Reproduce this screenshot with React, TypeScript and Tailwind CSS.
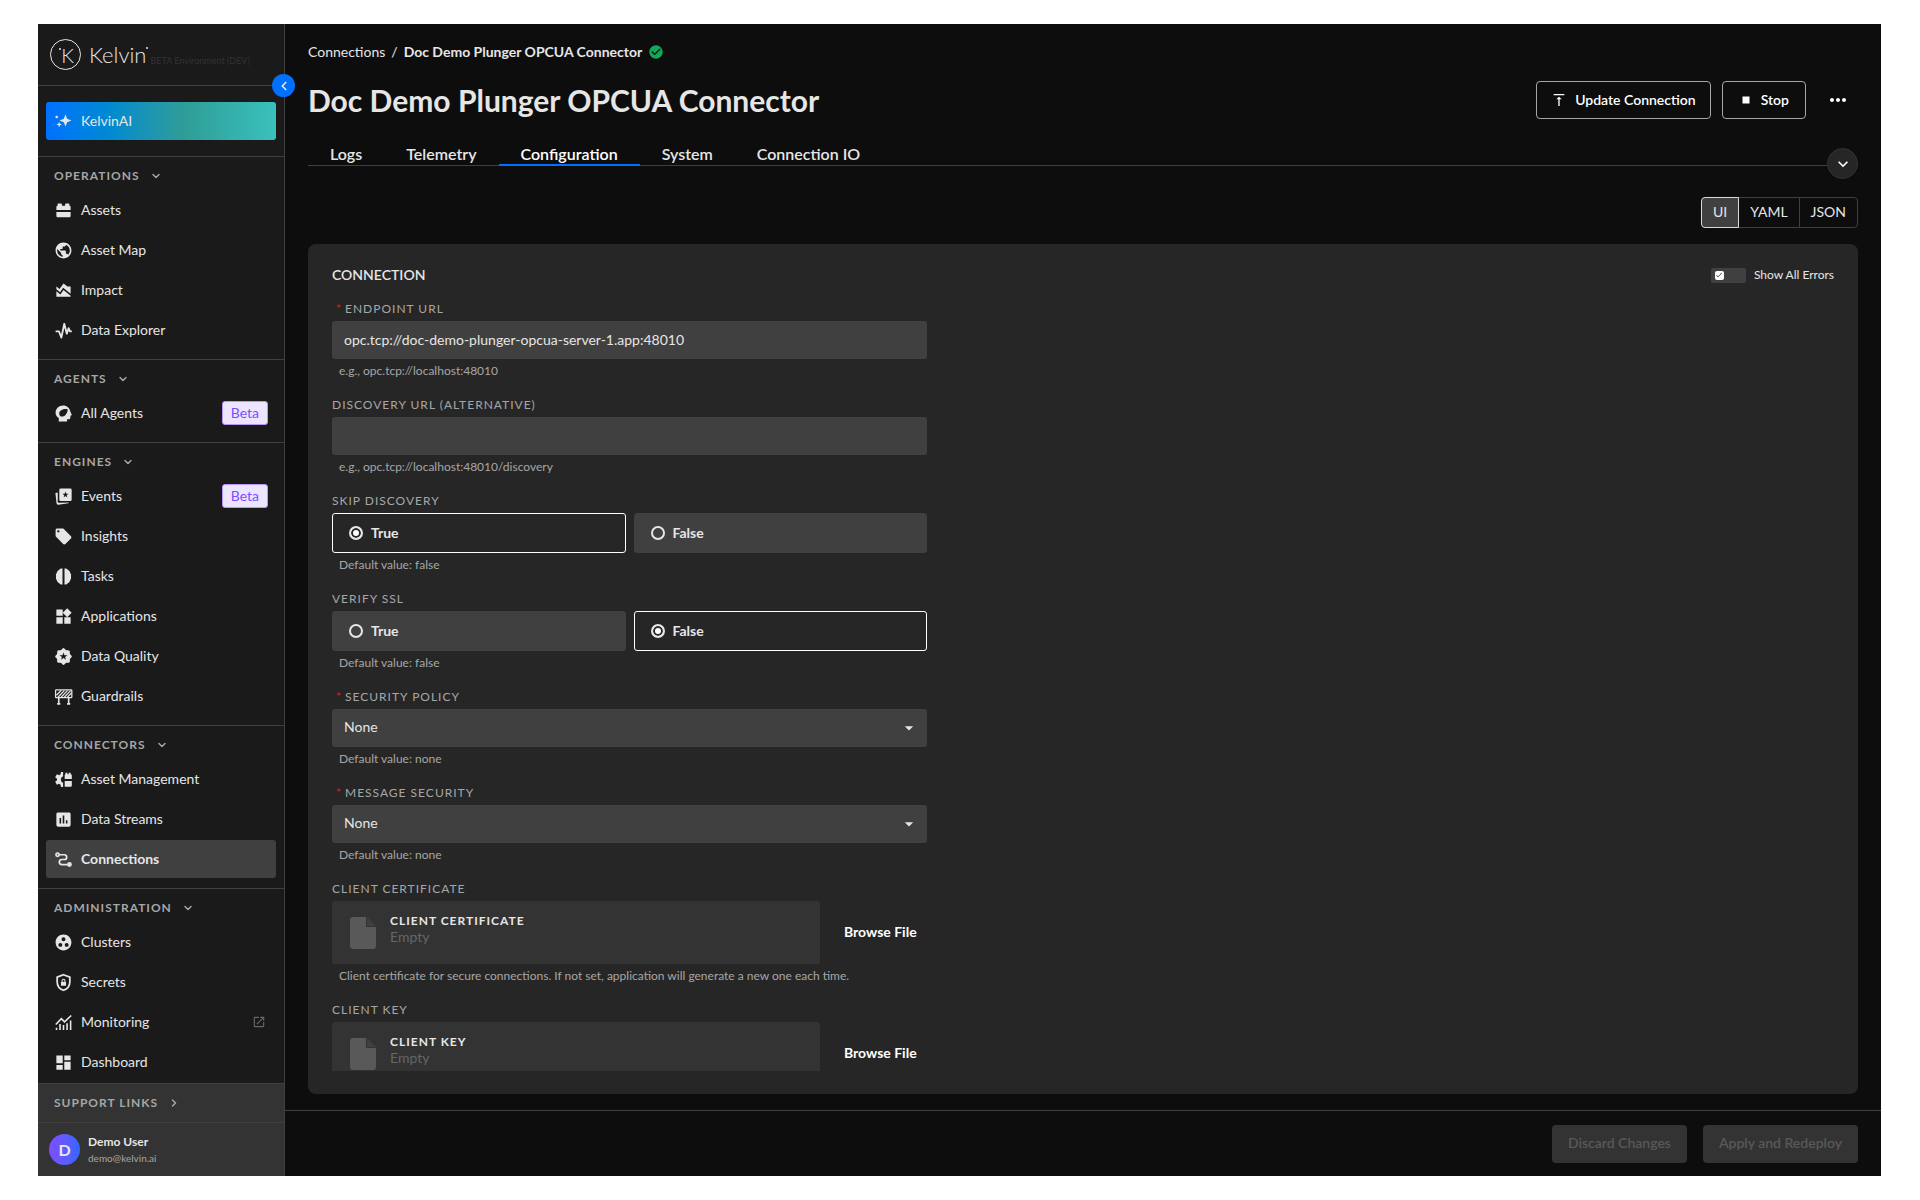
import React, { useState } from 'react';
import {
  MdAreaChart,
  MdArrowDropDown,
  MdAssessment,
  MdCheck,
  MdCheckCircle,
  MdDashboard,
  MdExpandMore,
  MdGroupWork,
  MdLocalOffer,
  MdMoreHoriz,
  MdOpenInNew,
  MdPublic,
  MdStop,
  MdVerticalAlignTop,
  MdWidgets,
} from 'react-icons/md';
import { ChevronDown, ChevronLeft, ChevronRight } from 'lucide-react';

type IconProps = { className?: string };

const SparkleIcon = ({ className }: IconProps) => (
  <svg viewBox="0 0 24 24" fill="currentColor" className={className}>
    <path d="M14.5 4.5 16.6 9.9 22 12 16.6 14.1 14.5 19.5 12.4 14.1 7 12 12.4 9.9Z" />
    <path d="M6.5 13.5 7.5 16 10 17 7.5 18 6.5 20.5 5.5 18 3 17 5.5 16Z" />
    <circle cx="3.4" cy="7.6" r="1.7" />
  </svg>
);

const BrickIcon = ({ className }: IconProps) => (
  <svg viewBox="0 0 24 24" fill="currentColor" className={className}>
    <path d="M3 11.5V7.5A1.5 1.5 0 0 1 4.5 6V4A1 1 0 0 1 5.5 3H9a1 1 0 0 1 1 1V6h4V4a1 1 0 0 1 1-1h3.5a1 1 0 0 1 1 1V6A1.5 1.5 0 0 1 21 7.5v4Z" />
    <path d="M3 14h18v5a1.5 1.5 0 0 1-1.5 1.5h-15A1.5 1.5 0 0 1 3 19Z" />
  </svg>
);

const PulseIcon = ({ className }: IconProps) => (
  <svg viewBox="0 0 24 24" fill="none" stroke="currentColor" strokeWidth="2.3" strokeLinejoin="round" className={className}>
    <path d="M2 13h4.2L9.3 21 13 3.5 16.2 16 18.5 9l1.7 4H22.5" />
  </svg>
);

const AgentIcon = ({ className }: IconProps) => (
  <svg viewBox="0 0 24 24" fill="currentColor" fillRule="evenodd" className={className}>
    <path d="M11.5 2C16.3 2 20 5.3 20.7 9.8L22.3 13.3c.3.7 0 1.2-.8 1.2H20.7V17c0 1.4-.9 2.3-2.2 2.3H16.5V22H6V17.8C3.5 16.3 2 13.9 2 11 2 6 6.2 2 11.5 2ZM17.2 6.5C11.5 5.7 7 8 6.6 11.5c-.1 1.5.2 2.7 1 3.6 1 .8 2 .9 3.5.6C14.500 14.8 17.3 11.5 17.2 6.5Z" />
  </svg>
);

const EventsIcon = ({ className }: IconProps) => (
  <svg viewBox="0 0 24 24" fill="currentColor" fillRule="evenodd" className={className}>
    <path d="M8.5 2H20.5A1.8 1.8 0 0 1 22.3 3.8V16A1.8 1.8 0 0 1 20.5 17.8H8.5A1.8 1.8 0 0 1 6.7 16V3.8A1.8 1.8 0 0 1 8.5 2ZM14.5 5.8 13.5 8.6H10.7L13 10.4 12.1 13.3 14.5 11.5 16.9 13.3 16 10.4 18.3 8.6H15.5Z" />
    <path d="M1.8 7.5 4.7 6.9V18.5A1.3 1.3 0 0 0 6 19.8L18.5 19.6 18.3 20.6 5.5 22.3A2 2 0 0 1 3.2 20.6Z" />
  </svg>
);

const TasksIcon = ({ className }: IconProps) => (
  <svg viewBox="0 0 24 24" fill="currentColor" className={className}>
    <path d="M10.7 2H8.5L4.5 5 2.5 9.5V14.5L4.5 19 8.5 22H10.7Z" />
    <path d="M13.3 2H15.5L19.500 5 21.5 9.5V14.5L19.5 19 15.5 22H13.3Z" />
  </svg>
);

const QualityIcon = ({ className }: IconProps) => (
  <svg viewBox="0 0 24 24" fill="currentColor" className={className}>
    <rect x="4" y="4" width="16" height="16" rx="2" />
    <rect x="4" y="4" width="16" height="16" rx="2" transform="rotate(45 12 12)" />
    <path fill="#1a1a1a" d="M12 6.8 13.3 10.4H17L14 12.6 15.2 16.2 12 14 8.8 16.2 10 12.6 7 10.4H10.7Z" />
  </svg>
);

const BarrierIcon = ({ className }: IconProps) => (
  <svg viewBox="0 0 24 24" fill="none" stroke="currentColor" strokeWidth="1.6" className={className}>
    <rect x="2" y="3.5" width="20.5" height="10" rx="1" />
    <path d="M3 10.5 9 4.5M5 13 13 4.5M9 13 17 4.5M13 13 21 4.5M17 13 22 7.5" />
    <path d="M6 14v7.5M18.5 14v7.5M4 21.3h4M16.5 21.3h4" strokeWidth="2" />
  </svg>
);

const AssetGearIcon = ({ className }: IconProps) => (
  <svg viewBox="0 0 24 24" fill="currentColor" className={className}>
    <path d="M11.5 2.5H8.8L8.3 5.5 6.5 6.5 3.7 5.5 1.5 9.2 3.8 11.2V12.8L1.5 14.8 3.7 18.5 6.5 17.5 8.3 18.5 8.8 21.5H11.5V16.2A4.5 4.5 0 0 1 11.5 7.8Z" />
    <path d="M13.5 11.5V6.5a1 1 0 0 1 1-1V3.5h2.5v2h1.5v-2H21v2a1.5 1.5 0 0 1 1.5 1.5v4.5ZM13.5 14H22.5v5.5a1.5 1.5 0 0 1-1.5 1.5H13.5Z" />
  </svg>
);

const RouteIcon = ({ className }: IconProps) => (
  <svg viewBox="0 0 24 24" fill="none" stroke="currentColor" strokeWidth="2.2" className={className}>
    <circle cx="4.5" cy="6" r="2" />
    <path d="M7 6H13A3 3 0 0 1 13 12H10A3.2 3.2 0 0 0 10 18.5H17" />
    <circle cx="19.5" cy="18.3" r="2" fill="currentColor" />
  </svg>
);

const ShieldLockIcon = ({ className }: IconProps) => (
  <svg viewBox="0 0 24 24" fill="none" stroke="currentColor" strokeWidth="2.2" className={className}>
    <path d="M12 2.2 20 5.2V11C20 16 16.6 20.3 12 21.8 7.4 20.3 4 16 4 11V5.2Z" />
    <rect x="8.8" y="11" width="6.4" height="5.2" rx="0.5" fill="currentColor" stroke="none" />
    <path d="M10.2 11V9.6a1.8 1.8 0 0 1 3.6 0V11" strokeWidth="1.3" />
  </svg>
);

const MonitoringIcon = ({ className }: IconProps) => (
  <svg viewBox="0 0 24 24" fill="none" stroke="currentColor" strokeWidth="2" className={className}>
    <path d="M2.2 14.5 9.3 7.2 13.3 11.2 21.8 3.2" />
    <path d="M3.2 21.5V18.5M7.6 21.5V14M12 21.5V15M16.5 21.5V13M21 21.5V9.5" />
  </svg>
);

const FileIcon = ({ className }: IconProps) => (
  <svg viewBox="0 0 26 32" className={className}>
    <path fill="#595959" d="M3 0H16V10H26V29a3 3 0 0 1-3 3H3a3 3 0 0 1-3-3V3a3 3 0 0 1 3-3Z" />
    <path fill="#404040" d="M17 0 26 9H17Z" />
  </svg>
);

type NavItem = {
  label: string;
  icon: React.ComponentType<IconProps>;
  beta?: boolean;
  external?: boolean;
};

const sections: { title: string; items: NavItem[] }[] = [
  {
    title: 'Operations',
    items: [
      { label: 'Assets', icon: BrickIcon },
      { label: 'Asset Map', icon: MdPublic },
      { label: 'Impact', icon: MdAreaChart },
      { label: 'Data Explorer', icon: PulseIcon },
    ],
  },
  {
    title: 'Agents',
    items: [{ label: 'All Agents', icon: AgentIcon, beta: true }],
  },
  {
    title: 'Engines',
    items: [
      { label: 'Events', icon: EventsIcon, beta: true },
      { label: 'Insights', icon: MdLocalOffer },
      { label: 'Tasks', icon: TasksIcon },
      { label: 'Applications', icon: MdWidgets },
      { label: 'Data Quality', icon: QualityIcon },
      { label: 'Guardrails', icon: BarrierIcon },
    ],
  },
  {
    title: 'Connectors',
    items: [
      { label: 'Asset Management', icon: AssetGearIcon },
      { label: 'Data Streams', icon: MdAssessment },
      { label: 'Connections', icon: RouteIcon },
    ],
  },
  {
    title: 'Administration',
    items: [
      { label: 'Clusters', icon: MdGroupWork },
      { label: 'Secrets', icon: ShieldLockIcon },
      { label: 'Monitoring', icon: MonitoringIcon, external: true },
      { label: 'Dashboard', icon: MdDashboard },
    ],
  },
];

const tabs = ['Logs', 'Telemetry', 'Configuration', 'System', 'Connection IO'];
const formats = ['UI', 'YAML', 'JSON'];

const Sidebar: React.FC = () => (
  <aside className="relative flex w-[247px] shrink-0 flex-col border-r border-[#404040] bg-[#1a1a1a]">
    {/* Logo */}
    <div className="flex h-[61px] shrink-0 items-center pl-3">
      <div className="relative flex size-[31px] items-center justify-center rounded-full border border-[#e6e6e6] pl-1 text-xl leading-none font-light">
        K
        <span className="absolute top-[8px] left-[8px] size-[2px] rounded-full bg-[#e6e6e6]" />
      </div>
      <div className="relative ml-2 text-[22px] leading-[30px] font-light">
        Kelvin
        <span className="absolute top-[7px] -right-[2px] size-[2px] rounded-full bg-[#e6e6e6]" />
      </div>
      <span className="mt-3 ml-1 text-[9px] leading-3 whitespace-nowrap text-[#333333]">BETA Environment (DEV)</span>
    </div>

    <button
      aria-label="Collapse sidebar"
      className="absolute top-[50px] -right-[11px] z-10 flex size-[23px] items-center justify-center rounded-full bg-[#0070ff]"
    >
      <ChevronLeft className="size-[14px]" strokeWidth={3} />
    </button>

    <div className="shrink-0 border-t border-[#404040] px-2 pt-4 pb-4">
      <a
        href="#kelvin-ai"
        className="flex h-[38px] items-center gap-2 rounded-[3px] bg-linear-to-r from-[#0070ff] via-[#2f9d97] via-60% to-[#3ac1bd] px-2 pb-px"
      >
        <SparkleIcon className="size-[19px]" />
        <span>KelvinAI</span>
      </a>
    </div>

    {/* Navigation */}
    <nav className="min-h-0 flex-1 overflow-hidden">
      {sections.map((section) => (
        <div key={section.title} className="border-t border-[#404040] px-2 pb-[10px]">
          <button className="flex h-[34px] items-center gap-[10px] pt-1 pl-2 text-xs font-bold tracking-[1px] text-[#a6a6a6] uppercase">
            {section.title}
            <ChevronDown className="size-3" strokeWidth={3} />
          </button>
          <div className="flex flex-col gap-[2px]">
            {section.items.map(({ label, icon: Icon, beta, external }) => (
              <a
                key={label}
                href="#"
                className={`flex h-[38px] items-center gap-2 rounded-[3px] px-2 ${
                  label === 'Connections' ? 'bg-[#404040] font-bold' : ''
                }`}
              >
                <Icon className="size-[19px]" />
                <span>{label}</span>
                {beta && (
                  <span className="ml-auto rounded-[3px] border border-[#b794f6] bg-[#ede5ff] px-2 leading-[22px] text-[#7c4dff]">
                    Beta
                  </span>
                )}
                {external && <MdOpenInNew className="mr-[2px] ml-auto size-[14px] text-[#666666]" />}
              </a>
            ))}
          </div>
        </div>
      ))}
    </nav>

    {/* Support and user */}
    <div className="shrink-0 bg-[#333333]">
      <button className="flex h-[39px] w-full items-center gap-[10px] border-t border-[#404040] pl-4 text-xs font-bold tracking-[1px] text-[#a6a6a6] uppercase">
        Support Links
        <ChevronRight className="size-3" strokeWidth={3} />
      </button>
      <div className="flex h-[54px] items-center gap-2 border-t border-[#404040] pl-[11px]">
        <div className="flex size-[31px] items-center justify-center rounded-full bg-linear-to-r from-[#7c4dff] to-[#3366ff] text-base font-bold">
          D
        </div>
        <div>
          <div className="text-xs leading-4 font-bold">Demo User</div>
          <div className="text-[10px] leading-4 text-[#a6a6a6]">demo@kelvin.ai</div>
        </div>
      </div>
    </div>
  </aside>
);

type FieldProps = {
  id: string;
  label: string;
  helper?: string;
  required?: boolean;
  children: React.ReactNode;
};

const Field: React.FC<FieldProps> = ({ id, label, helper, required, children }) => (
  <div className="mb-[18px]">
    <label htmlFor={id} className="mb-1 flex h-4 items-center text-xs tracking-[1px] text-[#a6a6a6] uppercase">
      {required && <span className="mr-1 ml-1 w-[5px] text-[#e02020]">*</span>}
      {label}
    </label>
    {children}
    {helper && <p className="mt-1 pl-[7px] text-xs leading-4 text-[#a6a6a6]">{helper}</p>}
  </div>
);

const BooleanField: React.FC<{ id: string; label: string; initial: string }> = ({ id, label, initial }) => {
  const [value, setValue] = useState(initial);

  return (
    <Field id={`${id}-True`} label={label} helper="Default value: false">
      <div role="radiogroup" aria-label={label} className="grid grid-cols-2 gap-2">
        {['True', 'False'].map((option) => (
          <label
            key={option}
            className={`flex h-10 items-center gap-2 rounded-[3px] border px-4 font-bold ${
              value === option ? 'border-white bg-[#262626]' : 'border-[#404040] bg-[#404040]'
            }`}
          >
            <input
              type="radio"
              id={`${id}-${option}`}
              name={id}
              checked={value === option}
              onChange={() => setValue(option)}
              className="size-[14px] appearance-none rounded-full border-2 border-[#e6e6e6] checked:bg-white checked:shadow-[inset_0_0_0_2px_#262626]"
            />
            {option}
          </label>
        ))}
      </div>
    </Field>
  );
};

const SelectField: React.FC<{ id: string; label: string }> = ({ id, label }) => (
  <Field id={id} label={label} helper="Default value: none" required>
    <div className="relative">
      <select id={id} className="block h-[38px] w-full appearance-none rounded-[3px] bg-[#404040] px-3 pb-[2px]">
        <option>None</option>
      </select>
      <MdArrowDropDown className="pointer-events-none absolute top-[9px] right-2 size-5" />
    </div>
  </Field>
);

const FileField: React.FC<{ id: string; label: string; helper?: string }> = ({ id, label, helper }) => (
  <Field id={id} label={label} helper={helper}>
    <div className="flex items-center">
      <div className="flex h-[63px] flex-1 items-center gap-[14px] rounded-[3px] bg-[#333333] pl-[18px]">
        <FileIcon className="h-8 w-[26px]" />
        <div className="pb-2">
          <div className="text-xs leading-4 font-bold tracking-[1px] uppercase">{label}</div>
          <div className="leading-4 text-[#666666]">Empty</div>
        </div>
      </div>
      <button id={id} className="w-[107px] pr-3 pb-[2px] pl-6 text-left font-bold whitespace-nowrap text-white">
        Browse File
      </button>
    </div>
  </Field>
);

const App: React.FC = () => {
  const [activeTab, setActiveTab] = useState('Configuration');
  const [format, setFormat] = useState('UI');
  const [endpoint, setEndpoint] = useState('opc.tcp://doc-demo-plunger-opcua-server-1.app:48010');
  const [discovery, setDiscovery] = useState('');
  const [showErrors, setShowErrors] = useState(false);

  return (
    <div className="h-screen bg-white py-6 pr-[39px] pl-[38px]">
      <div className="flex h-full bg-[#0d0d0d] font-['Lato',sans-serif] text-sm leading-5 text-[#e6e6e6]">
        <Sidebar />

        <div className="flex min-w-0 flex-1 flex-col">
          <main className="flex min-h-0 flex-1 flex-col px-[23px] pt-[18px] pb-4">
            {/* Breadcrumb */}
            <div className="flex h-5 items-center gap-[6px]">
              <a href="#connections">Connections</a>
              <span>/</span>
              <span className="font-bold">Doc Demo Plunger OPCUA Connector</span>
              <MdCheckCircle className="size-4 text-[#0fa958]" />
            </div>

            {/* Title */}
            <div className="mt-[19px] flex h-[38px] items-center">
              <h1 className="flex-1 text-[30px] leading-[38px] font-bold">Doc Demo Plunger OPCUA Connector</h1>
              <button className="flex h-[38px] items-center gap-2 rounded border border-[#a6a6a6] px-[14px] font-semibold text-white">
                <MdVerticalAlignTop className="size-4" />
                Update Connection
              </button>
              <button className="ml-[11px] flex h-[38px] items-center gap-2 rounded border border-[#a6a6a6] px-4 font-semibold text-white">
                <MdStop className="size-[14px]" />
                Stop
              </button>
              <button aria-label="More actions" className="mr-2 ml-5">
                <MdMoreHoriz className="size-6 text-white" />
              </button>
            </div>

            {/* Tabs */}
            <div className="relative mt-[25px] flex h-[22px] border-b border-[#404040]">
              {tabs.map((tab) => (
                <button
                  key={tab}
                  onClick={() => setActiveTab(tab)}
                  className={`h-[22px] border-b-2 px-[22px] text-base leading-5 font-semibold ${
                    activeTab === tab ? 'border-[#0070ff] text-white' : 'border-transparent'
                  }`}
                >
                  {tab}
                </button>
              ))}
              <button
                aria-label="Expand header"
                className="absolute top-1 right-0 flex size-[31px] items-center justify-center rounded-full border border-[#333333] bg-[#262626]"
              >
                <MdExpandMore className="size-5 text-white" />
              </button>
            </div>

            {/* Format switch */}
            <div className="mt-[31px] flex self-end">
              {formats.map((item) => (
                <button
                  key={item}
                  onClick={() => setFormat(item)}
                  className={`-ml-px h-[31px] border px-[11px] pb-[2px] first:rounded-l last:rounded-r ${
                    format === item ? 'z-10 border-[#d9d9d9] bg-[#404040]' : 'border-[#404040]'
                  }`}
                >
                  {item}
                </button>
              ))}
            </div>

            {/* Configuration form */}
            <section className="mt-4 flex min-h-0 flex-1 flex-col rounded-lg bg-[#262626] px-6 pt-[21px] pb-[23px]">
              <div className="min-h-0 flex-1 overflow-hidden">
                <div className="mb-4 flex items-center justify-between">
                  <h2 className="font-semibold uppercase">Connection</h2>
                  <label className="flex items-center gap-2 text-xs">
                    <span className="flex h-[15px] w-[35px] items-center rounded-xs bg-[#404040] px-1">
                      <input
                        type="checkbox"
                        checked={showErrors}
                        onChange={(e) => setShowErrors(e.target.checked)}
                        className="peer sr-only"
                      />
                      <span className="flex size-[9px] items-center justify-center rounded-[2px] bg-white text-[#262626] peer-checked:ml-auto">
                        <MdCheck className="size-2" />
                      </span>
                    </span>
                    Show All Errors
                  </label>
                </div>

                <div className="max-w-[595px]">
                  <Field id="endpoint" label="Endpoint URL" helper="e.g., opc.tcp://localhost:48010" required>
                    <input
                      id="endpoint"
                      type="text"
                      value={endpoint}
                      onChange={(e) => setEndpoint(e.target.value)}
                      className="block h-[38px] w-full rounded-[3px] bg-[#404040] px-3 pb-[2px]"
                    />
                  </Field>
                  <Field id="discovery" label="Discovery URL (Alternative)" helper="e.g., opc.tcp://localhost:48010/discovery">
                    <input
                      id="discovery"
                      type="text"
                      value={discovery}
                      onChange={(e) => setDiscovery(e.target.value)}
                      className="block h-[38px] w-full rounded-[3px] bg-[#404040] px-3 pb-[2px]"
                    />
                  </Field>
                  <BooleanField id="skip-discovery" label="Skip Discovery" initial="True" />
                  <BooleanField id="verify-ssl" label="Verify SSL" initial="False" />
                  <SelectField id="security-policy" label="Security Policy" />
                  <SelectField id="message-security" label="Message Security" />
                  <FileField
                    id="client-certificate"
                    label="Client Certificate"
                    helper="Client certificate for secure connections. If not set, application will generate a new one each time."
                  />
                  <FileField id="client-key" label="Client Key" />
                </div>
              </div>
            </section>
          </main>

          {/* Footer */}
          <footer className="flex h-[66px] shrink-0 items-center justify-end gap-4 border-t border-[#404040] px-[23px]">
            <button disabled className="h-[38px] rounded bg-[#333333] px-4 pb-px font-semibold text-[#595959]">
              Discard Changes
            </button>
            <button disabled className="h-[38px] rounded bg-[#333333] px-4 pb-px font-semibold text-[#595959]">
              Apply and Redeploy
            </button>
          </footer>
        </div>
      </div>
    </div>
  );
};

export default App;
